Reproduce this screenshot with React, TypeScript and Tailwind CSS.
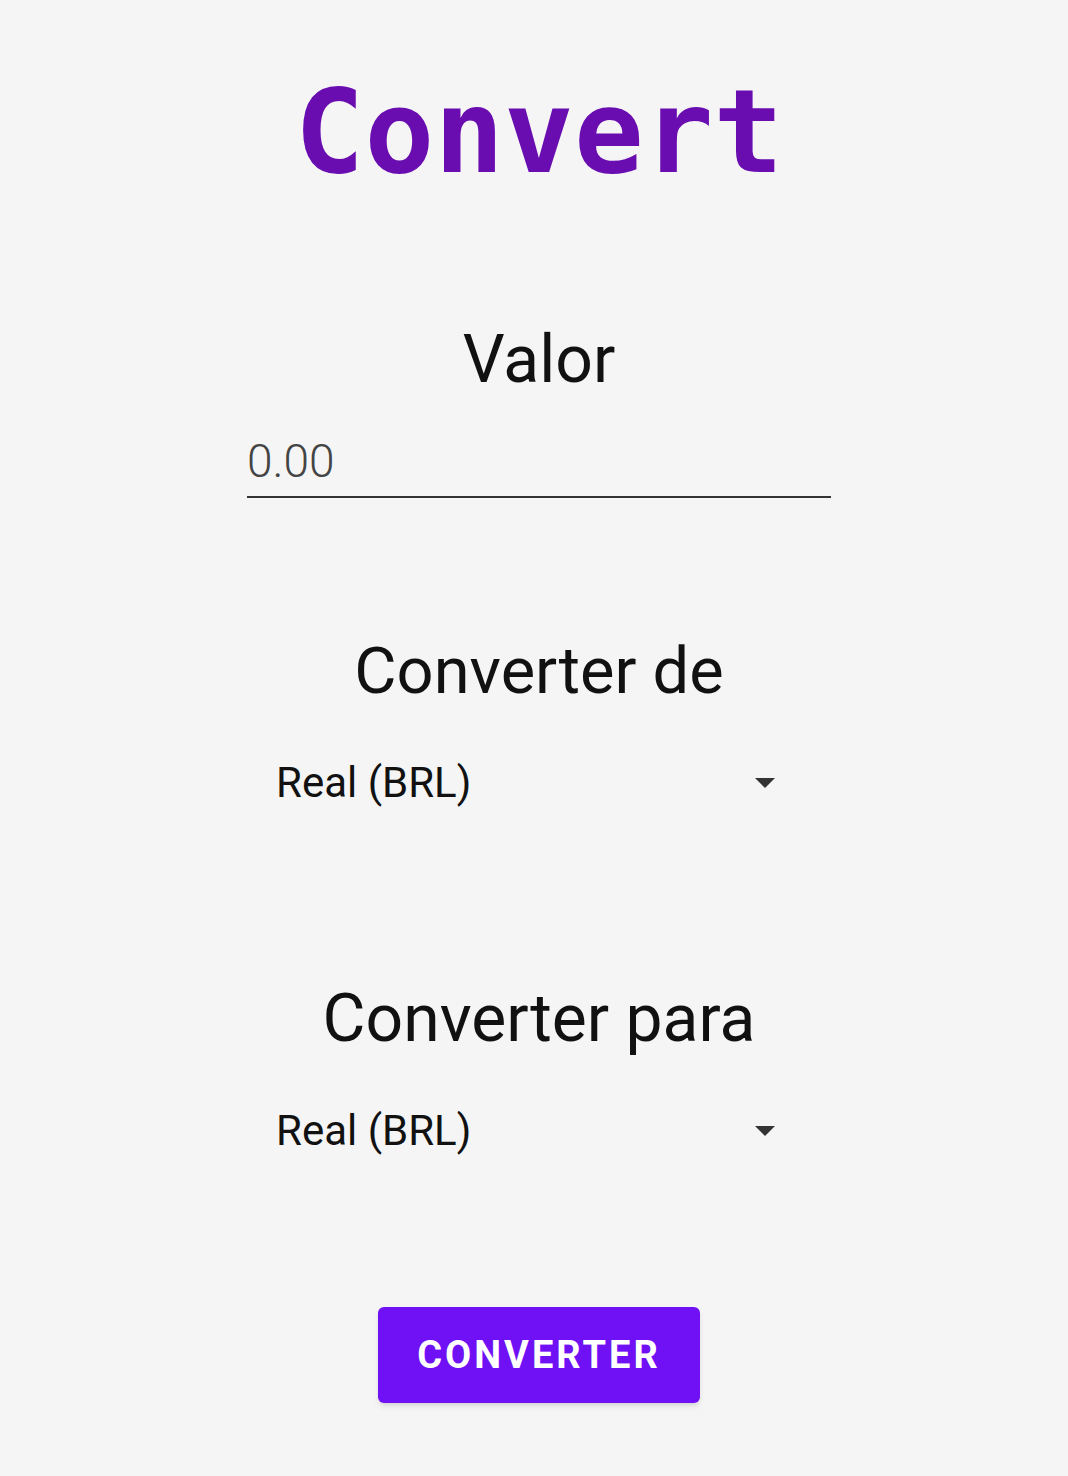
import React from "react";

function Spinner({ label }: { label: string }) {
  return (
    <div className="w-[530px] flex items-center justify-between pl-[2px] pr-[28px]">
      <span className="text-[42px] text-[#111] font-['Roboto',sans-serif]">{label}</span>
      {/* dropdown arrow */}
      <svg width="22" height="12" viewBox="0 0 22 12">
        <path d="M1 1 L21 1 L11 11 Z" fill="#333" />
      </svg>
    </div>
  );
}

export default function App() {
  const [value, setValue] = React.useState("");
  return (
    <div className="min-h-[1476px] w-full bg-[#f5f5f5] pl-[10px] flex flex-col items-center font-['Roboto',sans-serif]">
      {/* title */}
      <h1 className="mt-[62px] text-[116px] leading-[140px] font-bold text-[#6a0db0] font-['DejaVu_Sans_Mono',monospace]">
        Convert
      </h1>

      {/* valor */}
      <p className="mt-[118px] text-[66px] leading-[80px] text-[#111]">Valor</p>
      <input
        value={value}
        onChange={(e) => setValue(e.target.value)}
        placeholder="0.00"
        className="mt-[27px] w-[584px] border-b-2 border-[#333] bg-transparent pb-0 text-[46px] font-light text-[#222] placeholder:text-[#444] outline-none"
      />

      {/* converter de */}
      <p className="mt-[133px] text-[65px] leading-[80px] text-[#111]">Converter de</p>
      <div className="mt-[40px]">
        <Spinner label="Real (BRL)" />
      </div>

      {/* converter para */}
      <p className="mt-[165px] text-[66px] leading-[80px] text-[#111]">Converter para</p>
      <div className="mt-[40px]">
        <Spinner label="Real (BRL)" />
      </div>

      {/* button */}
      <button className="mt-[145px] w-[322px] h-[96px] rounded-[6px] bg-[#7010f5] text-white text-[38px] font-bold tracking-[3px] shadow-md">
        CONVERTER
      </button>
    </div>
  );
}
